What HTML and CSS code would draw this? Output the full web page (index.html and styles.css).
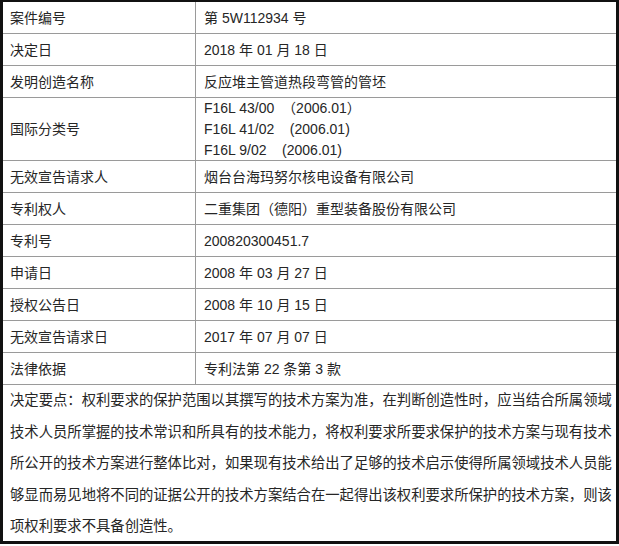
FILE: index.html
```html
<!DOCTYPE html>
<html lang="zh-CN">
<head>
<meta charset="utf-8">
<title>案件信息</title>
<link rel="stylesheet" href="styles.css">
</head>
<body>
<div class="sheet">
  <div class="grid">
    <div class="cell label">案件编号</div>
    <div class="cell value">第 5W112934 号</div>

    <div class="cell label">决定日</div>
    <div class="cell value">2018 年 01 月 18 日</div>

    <div class="cell label">发明创造名称</div>
    <div class="cell value">反应堆主管道热段弯管的管坯</div>

    <div class="cell label tall">国际分类号</div>
    <div class="cell value tall multi">
      <span class="line">F16L 43/00  <span class="cjk">（</span>2006.01<span class="cjk">）</span></span>
      <span class="line">F16L 41/02    (2006.01)</span>
      <span class="line">F16L 9/02    (2006.01)</span>
    </div>

    <div class="cell label">无效宣告请求人</div>
    <div class="cell value">烟台台海玛努尔核电设备有限公司</div>

    <div class="cell label">专利权人</div>
    <div class="cell value">二重集团（德阳）重型装备股份有限公司</div>

    <div class="cell label">专利号</div>
    <div class="cell value">200820300451.7</div>

    <div class="cell label">申请日</div>
    <div class="cell value">2008 年 03 月 27 日</div>

    <div class="cell label">授权公告日</div>
    <div class="cell value">2008 年 10 月 15 日</div>

    <div class="cell label">无效宣告请求日</div>
    <div class="cell value">2017 年 07 月 07 日</div>

    <div class="cell label">法律依据</div>
    <div class="cell value">专利法第 22 条第 3 款</div>
  </div>
  <div class="note">决定要点：权利要求的保护范围以其撰写的技术方案为准，在判断创造性时，应当结合所属领域<br>技术人员所掌握的技术常识和所具有的技术能力，将权利要求所要求保护的技术方案与现有技术<br>所公开的技术方案进行整体比对，如果现有技术给出了足够的技术启示使得所属领域技术人员能<br>够显而易见地将不同的证据公开的技术方案结合在一起得出该权利要求所保护的技术方案，则该<br>项权利要求不具备创造性。</div>
</div>
</body>
</html>
```

FILE: styles.css
```css
html, body {
  margin: 0;
  padding: 0;
  background: #ffffff;
}

body {
  font-family: "Liberation Sans", "Noto Sans CJK SC", sans-serif;
  font-size: 14px;
  color: #262626;
}

.sheet {
  width: 619px;
  height: 544px;
  box-sizing: border-box;
  border-top: 2px solid #111111;
  border-left: 3px solid #111111;
  border-right: 3px solid #111111;
  border-bottom: 3px solid #111111;
  display: flex;
  flex-direction: column;
}

.grid {
  display: grid;
  grid-template-columns: 193px 1fr;
}

.cell {
  height: 31px;
  border-bottom: 1px solid #9a9a9a;
  display: flex;
  align-items: center;
  padding-left: 7px;
  line-height: 20px;
  white-space: nowrap;
}

.label {
  border-right: 1px solid #9a9a9a;
}

.value {
  padding-left: 8px;
}

.tall {
  height: 62px;
}

.multi {
  flex-direction: column;
  align-items: flex-start;
  justify-content: center;
}

.line {
  display: block;
  line-height: 21px;
  white-space: pre;
}

.cjk {
  font-family: "Noto Sans CJK SC", sans-serif;
}

.note {
  flex: 1;
  padding: 0 0 0 7px;
  font-size: 14.33px;
  line-height: 31.5px;
  white-space: nowrap;
  color: #262626;
}
```
